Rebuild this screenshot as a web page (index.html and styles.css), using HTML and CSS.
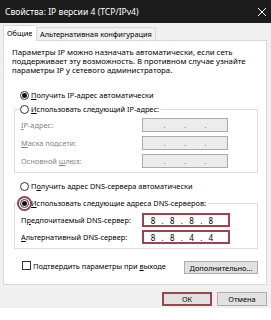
FILE: index.html
```html
<!DOCTYPE html>
<html lang="ru">
<head>
<meta charset="UTF-8">
<meta name="viewport" content="width=device-width, initial-scale=1.0">
<title>Свойства: IP версии 4 (TCP/IPv4)</title>
<link rel="stylesheet" href="styles.css">
</head>
<body>

<div class="window">
    <div class="titlebar">
        <span>Свойства: IP версии 4 (TCP/IPv4)</span>
        <svg class="close" width="10" height="10" viewBox="0 0 10 10">
            <path d="M1 1 L9 9 M9 1 L1 9" stroke="#fff" stroke-width="1"/>
        </svg>
    </div>

    <div class="content">
        <div class="tabs">
            <div class="tab active">Общие</div>
            <div class="tab">Альтернативная конфигурация</div>
        </div>

        <div class="panel">
            <p class="intro">Параметры IP можно назначать автоматически, если сеть<br>поддерживает эту возможность. В противном случае узнайте<br>параметры IP у сетевого администратора.</p>

            <label class="option first">
                <span class="radio checked"></span>
                <span><u>П</u>олучить IP-адрес автоматически</span>
            </label>

            <fieldset class="group">
                <legend class="option">
                    <span class="radio"></span>
                    <span><u>И</u>спользовать следующий IP-адрес:</span>
                </legend>
                <div class="row disabled">
                    <span><u>I</u>P-адрес:</span>
                    <div class="ipbox"><span></span><i>.</i><span></span><i>.</i><span></span><i>.</i><span></span></div>
                </div>
                <div class="row disabled">
                    <span><u>М</u>аска подсети:</span>
                    <div class="ipbox"><span></span><i>.</i><span></span><i>.</i><span></span><i>.</i><span></span></div>
                </div>
                <div class="row disabled">
                    <span>Основной <u>ш</u>люз:</span>
                    <div class="ipbox"><span></span><i>.</i><span></span><i>.</i><span></span><i>.</i><span></span></div>
                </div>
            </fieldset>

            <label class="option second">
                <span class="radio"></span>
                <span>П<u>о</u>лучить адрес DNS-сервера автоматически</span>
            </label>

            <fieldset class="group dns">
                <legend class="option">
                    <span class="radio checked marked"></span>
                    <span><u>И</u>спользовать следующие адреса DNS-серверов:</span>
                </legend>
                <div class="row">
                    <span>П<u>р</u>едпочитаемый DNS-сервер:</span>
                    <div class="ipbox filled"><span>8</span><i>.</i><span>8</span><i>.</i><span>8</span><i>.</i><span>8</span></div>
                </div>
                <div class="row">
                    <span><u>А</u>льтернативный DNS-сервер:</span>
                    <div class="ipbox filled"><span>8</span><i>.</i><span>8</span><i>.</i><span>4</span><i>.</i><span>4</span></div>
                </div>
            </fieldset>

            <div class="bottom">
                <label class="check">
                    <span class="box"></span>
                    <span>Подтвердить параметры при <u>в</u>ыходе</span>
                </label>
                <button class="btn wide"><u>Д</u>ополнительно...</button>
            </div>
        </div>

        <div class="footer">
            <button class="btn marked">ОК</button>
            <button class="btn">Отмена</button>
        </div>
    </div>
</div>

</body>
</html>
```

FILE: styles.css
```css
body {
    margin: 0;
    width: 271px;
    height: 320px;
    background: #fff;
    font-family: "Noto Sans", "Open Sans", sans-serif;
    font-size: 7.4px;
    color: #000;
    overflow: hidden;
}
u {
    text-decoration: underline;
    text-underline-offset: 1px;
}
.window {
    background: #f0f0f0;
    height: 308px;
}
.titlebar {
    height: 23px;
    background: #1c1c1c;
    color: #fff;
    font-size: 8.6px;
    display: flex;
    align-items: center;
    justify-content: space-between;
    padding: 0 4px 0 5px;
    box-sizing: border-box;
}
.content {
    padding: 2px 4px 0 3px;
}
.tabs {
    display: flex;
    align-items: flex-end;
    height: 15px;
}
.tab {
    height: 13px;
    line-height: 12px;
    padding: 0 3px;
    border: 1px solid #d9d9d9;
    border-bottom: none;
    box-sizing: border-box;
    background: #f0f0f0;
    white-space: nowrap;
}
.tab.active {
    height: 16px;
    line-height: 14px;
    width: 33px;
    background: #fff;
    margin-bottom: -1px;
    position: relative;
    z-index: 1;
    border-right: none;
}
.panel {
    background: #fff;
    border: 1px solid #d9d9d9;
    height: 245px;
    box-sizing: border-box;
    padding: 0 8px 0 10px;
}
.intro {
    margin: 7px 0 0 -2px;
    line-height: 9px;
    font-size: 7.8px;
    white-space: nowrap;
}
.option {
    display: flex;
    align-items: center;
    gap: 2px;
    height: 10px;
    white-space: nowrap;
}
.option.first {
    margin: 15px 0 0 6px;
}
.option.second {
    margin: 8px 0 0 6px;
}
.radio {
    width: 9px;
    height: 9px;
    border: 1px solid #333;
    border-radius: 50%;
    box-sizing: border-box;
    background: #fff;
    display: flex;
    align-items: center;
    justify-content: center;
}
.radio.checked::after {
    content: "";
    width: 5px;
    height: 5px;
    border-radius: 50%;
    background: #111;
}
.radio.marked {
    outline: 2px solid #a0414f;
    outline-offset: 1px;
}
.group {
    margin: 4px 0 0 0;
    border: 1px solid #dcdcdc;
    padding: 4px 6px 4px 6px;
    display: flex;
    flex-direction: column;
    gap: 4px;
}
.group legend {
    padding: 0 2px 0 0;
    margin-left: -1px;
}
.group.dns {
    margin-top: 7px;
    padding-top: 5px;
    gap: 3px;
}
.row {
    display: grid;
    grid-template-columns: 121px 86px;
    align-items: center;
    height: 14px;
}
.row.disabled {
    color: #838383;
}
.ipbox {
    height: 14px;
    box-sizing: border-box;
    border: 1px solid #ababab;
    background: #ececec;
    display: flex;
    align-items: center;
    justify-content: center;
    color: #777;
}
.ipbox span {
    width: 10px;
    text-align: center;
}
.ipbox i {
    font-style: normal;
    width: 10.5px;
    text-align: center;
}
.ipbox.filled {
    width: 88px;
    border: 2px solid #a0414f;
    background: #fff;
    color: #000;
    justify-content: flex-start;
    padding-left: 4px;
    font-size: 8px;
}
.ipbox.filled i {
    width: 9.3px;
}
.bottom {
    display: flex;
    align-items: center;
    justify-content: space-between;
    margin-top: 12px;
    height: 13px;
}
.check {
    display: flex;
    align-items: center;
    gap: 2px;
    margin-left: 8px;
    margin-top: -4px;
}
.box {
    width: 9px;
    height: 9px;
    border: 1px solid #333;
    box-sizing: border-box;
    background: #fff;
}
.btn {
    font-family: inherit;
    font-size: 7.4px;
    color: #000;
    background: #e1e1e1;
    border: 1px solid #adadad;
    height: 14px;
    width: 50px;
    padding: 0;
    box-sizing: border-box;
}
.btn.wide {
    width: 74px;
    height: 13px;
}
.btn.marked {
    border: 2px solid #a0414f;
}
.footer {
    display: flex;
    justify-content: flex-end;
    gap: 5px;
    margin-top: 7px;
}
```
